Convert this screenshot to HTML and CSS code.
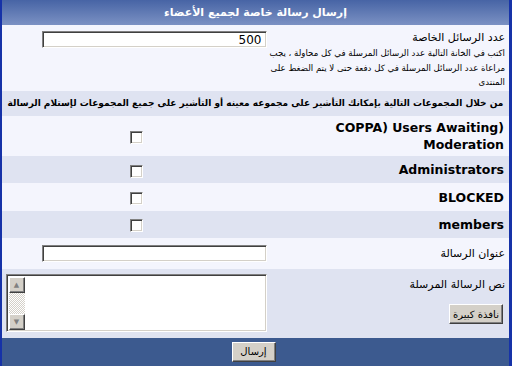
FILE: index.html
```html
<!DOCTYPE html>
<html lang="ar" dir="rtl">
<head>
    <meta charset="UTF-8">
    <title>إرسال رسالة خاصة لجميع الأعضاء</title>
    <link rel="stylesheet" href="styles.css">
</head>
<body>
    <table class="panel">
        <colgroup>
            <col class="col-label">
            <col class="col-field">
        </colgroup>
        <tr class="head">
            <th colspan="2">إرسال رسالة خاصة لجميع الأعضاء</th>
        </tr>
        <tr class="row1 top">
            <td class="label">
                <div class="title">عدد الرسائل الخاصة</div>
                <div class="desc">اكتب في الخانة التالية عدد الرسائل المرسلة في كل محاولة ، يجب مراعاة عدد الرسائل المرسلة في كل دفعة حتى لا يتم الضغط على المنتدى</div>
            </td>
            <td class="field"><input type="text" class="text num" value="500"></td>
        </tr>
        <tr class="row2 note">
            <td colspan="2">من خلال المجموعات التالية بإمكانك التأشير على مجموعه معينه أو التأشير على جميع المجموعات لإستلام الرسالة</td>
        </tr>
        <tr class="row1 group tall">
            <td class="gname"><span dir="ltr">COPPA) Users Awaiting) Moderation</span></td>
            <td class="check"><input type="checkbox"></td>
        </tr>
        <tr class="row2 group">
            <td class="gname">Administrators</td>
            <td class="check"><input type="checkbox"></td>
        </tr>
        <tr class="row1 group">
            <td class="gname">BLOCKED</td>
            <td class="check"><input type="checkbox"></td>
        </tr>
        <tr class="row2 group">
            <td class="gname">members</td>
            <td class="check"><input type="checkbox"></td>
        </tr>
        <tr class="row1 subject">
            <td class="label">عنوان الرسالة</td>
            <td class="field"><input type="text" class="text"></td>
        </tr>
        <tr class="row2 top message">
            <td class="label">
                <div class="title">نص الرسالة المرسلة</div>
                <button class="btn big" type="button">نافذة كبيرة</button>
            </td>
            <td class="area">
                <div class="textbox">
                    <textarea></textarea>
                    <div class="scroll">
                        <span class="arrow">&#9650;</span>
                        <span class="track"></span>
                        <span class="arrow">&#9660;</span>
                    </div>
                </div>
            </td>
        </tr>
        <tr class="foot">
            <td colspan="2"><button class="btn" type="submit">إرسال</button></td>
        </tr>
    </table>
</body>
</html>
```

FILE: styles.css
```css
html, body {
    margin: 0;
    padding: 0;
    height: 100%;
    background: #f4f5fd;
}
body {
    font-family: Tahoma, "DejaVu Sans", sans-serif;
    font-size: 11px;
    color: #000;
}
.panel {
    width: 100%;
    height: 366px;
    table-layout: fixed;
    border-collapse: collapse;
    border-left: 2px solid #1632a8;
    border-right: 3px solid #1632a8;
}
.col-label { width: 237px; }
.panel td, .panel th {
    padding: 0;
}
.head th {
    height: 25px;
    background: linear-gradient(#4764a5, #7b91c3);
    color: #fff;
    font-size: 11px;
    font-weight: bold;
    text-align: center;
}
.row1 { background: #f4f5fd; }
.row2 { background: #dfe3f1; }
.label {
    padding-right: 4px !important;
    vertical-align: middle;
}
.top td { vertical-align: top; }
.row1.top { height: 65px; }
.row1.top td { padding-top: 5px; }
.title {
    font-size: 11px;
    line-height: 15px;
}
.desc {
    font-size: 8.6px;
    line-height: 14.5px;
    margin-top: 1px;
    margin-left: -4px;
}
.field {
    padding-left: 4px !important;
}
.text {
    display: block;
    width: 225px;
    height: 17px;
    box-sizing: border-box;
    margin: 0 7px 0 auto;
    padding: 0 4px;
    border: 1px solid;
    border-color: #808080 #fff #fff #808080;
    box-shadow: inset 1px 1px #404040, inset -1px -1px #d4d0c8;
    background: #fff;
    font-family: "DejaVu Sans", sans-serif;
    font-size: 12px;
}
.num { text-align: right; direction: ltr; }
.row1.top .text { margin-top: 1px; }
.note { height: 25px; }
.note td {
    font-weight: bold;
    font-size: 9px;
    text-align: center;
    white-space: nowrap;
    letter-spacing: -0.2px;
}
.group { height: 27px; }
.group.tall { height: 40px; }
.gname {
    font-family: "DejaVu Sans", Verdana, sans-serif;
    font-size: 12.5px;
    font-weight: bold;
    padding-right: 5px !important;
    line-height: 17px;
}
.gname span { display: inline-block; text-align: right; }
.check { text-align: center; }
.check input {
    appearance: none;
    display: inline-block;
    width: 13px;
    height: 13px;
    margin: 3px 2px 0 0;
    box-sizing: border-box;
    border: 1px solid;
    border-color: #808080 #fff #fff #808080;
    box-shadow: inset 1px 1px #404040, inset -1px -1px #d4d0c8;
    background: #fff;
    vertical-align: middle;
}
.subject { height: 31px; }
.message { height: 68px; }
.message td { padding-top: 5px; }
.message .title { margin-top: 3px; }
.btn {
    font-family: Tahoma, "DejaVu Sans", sans-serif;
    font-size: 10px;
    height: 20px;
    padding: 0 6px;
    background: #d4d0c8;
    border: 1px solid;
    border-color: #fff #404040 #404040 #fff;
    box-shadow: inset -1px -1px #808080;
    color: #000;
}
.big {
    display: block;
    width: 54px;
    margin: 12px 2px 0 0;
    padding: 0;
}
.textbox {
    display: flex;
    width: 261px;
    height: 58px;
    margin-right: 7px;
    box-sizing: border-box;
    border: 1px solid;
    border-color: #808080 #fff #fff #808080;
    box-shadow: inset 1px 1px #404040, inset -1px -1px #d4d0c8;
    background: #fff;
    padding: 2px 1px 1px 2px;
}
.textbox textarea {
    flex: 1;
    border: 0;
    resize: none;
    outline: none;
    background: transparent;
    padding: 0;
}
.scroll {
    display: flex;
    flex-direction: column;
    width: 16px;
}
.arrow {
    height: 16px;
    box-sizing: border-box;
    background: #d4d0c8;
    border: 1px solid;
    border-color: #fff #404040 #404040 #fff;
    box-shadow: inset -1px -1px #808080;
    color: #808080;
    font-size: 7px;
    line-height: 14px;
    text-align: center;
}
.track {
    flex: 1;
    background-color: #fff;
    background-image: repeating-conic-gradient(#d4d0c8 0 25%, #fff 0 50%);
    background-size: 2px 2px;
}
.foot { height: 28px; }
.foot td {
    background: #3c5a8f;
    text-align: center;
    vertical-align: middle;
}
.foot .btn { width: 44px; padding: 0; margin-right: 4px; }
```
